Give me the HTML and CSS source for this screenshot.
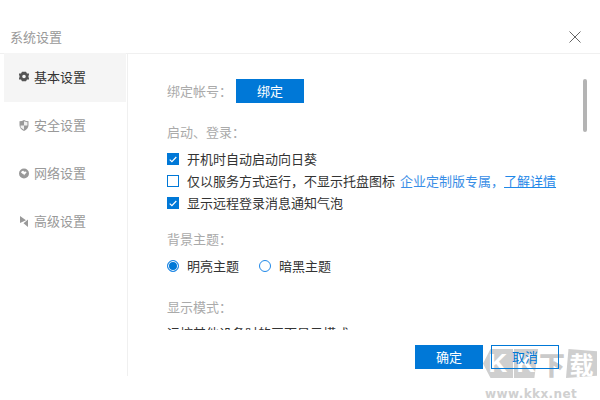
FILE: index.html
```html
<!DOCTYPE html>
<html lang="zh">
<head>
<meta charset="utf-8">
<title>系统设置</title>
<link rel="stylesheet" href="styles.css">
</head>
<body>
<div class="dialog">
  <header class="titlebar">
    <span class="title">系统设置</span>
    <svg class="close" width="12" height="12" viewBox="0 0 12 12"><path d="M.5.5l11 11M11.5.5l-11 11" stroke="#666" stroke-width="1" fill="none"/></svg>
  </header>
  <div class="body">
    <nav class="sidebar">
      <div class="nav-item active">
        <svg class="nav-icon" viewBox="0 0 10 10"><path fill-rule="evenodd" d="M3 .3h4l1 1.700 2 .1v1L9.400 5l.6 1.900v1l-2 .1-1 1.700H3L2 8 0 7.900v-1L.6 5 0 3.100v-1L2 2zM5 3.200a1.800 1.800 0 100 3.600 1.800 1.800 0 000-3.600z"/></svg>
        <span>基本设置</span>
      </div>
      <div class="nav-item">
        <svg class="nav-icon" viewBox="0 0 10 11"><path d="M5 0c1.300.8 2.800 1.200 4.500 1.300v4C9.500 7.800 7.500 10 5 11 2.500 10 .5 7.800.5 5.300v-4C2.200 1.200 3.700.8 5 0z"/><path fill="#fff" d="M5 1.300v4.200H1.600v2C3 8.500 4 9.300 5 9.700V5.500h3.400V2.200C7.100 2.100 6 1.800 5 1.300z" opacity=".85"/></svg>
        <span>安全设置</span>
      </div>
      <div class="nav-item">
        <svg class="nav-icon" viewBox="0 0 10 10"><path fill-rule="evenodd" d="M5 0a5 5 0 110 10A5 5 0 015 0zM3 2.500L2 4l1.500 1.200 1 .2L5 7l1-1.500 1.500-1.200-.5-1.300-2 .3-.5-1z"/></svg>
        <span>网络设置</span>
      </div>
      <div class="nav-item">
        <svg class="nav-icon" viewBox="0 0 10 11"><path d="M1 0l6 4.200L1 7zM9 3.500V11L4.500 7.300z"/></svg>
        <span>高级设置</span>
      </div>
    </nav>
    <main class="main">
      <div class="scrollpane">
        <section class="bind-row">
          <span class="label">绑定帐号&#xFF1A;</span>
          <button class="btn primary">绑定</button>
        </section>
        <section class="group startup">
          <div class="label">启动、登录&#xFF1A;</div>
          <div class="options">
            <label class="check"><span class="box on"><svg width="8" height="7" viewBox="0 0 8 7"><path d="M.7 3.600l2.200 2L7.300 1" stroke="#fff" stroke-width="1.200" fill="none"/></svg></span>开机时自动启动向日葵</label>
            <label class="check"><span class="box"></span>仅以服务方式运行&#xFF0C;不显示托盘图标<a class="note">企业定制版专属&#xFF0C;</a><a class="link">了解详情</a></label>
            <label class="check"><span class="box on"><svg width="8" height="7" viewBox="0 0 8 7"><path d="M.7 3.600l2.200 2L7.300 1" stroke="#fff" stroke-width="1.200" fill="none"/></svg></span>显示远程登录消息通知气泡</label>
          </div>
        </section>
        <section class="group theme">
          <div class="label">背景主题&#xFF1A;</div>
          <div class="radios">
            <label class="radio"><span class="dot on"></span>明亮主题</label>
            <label class="radio"><span class="dot"></span>暗黑主题</label>
          </div>
        </section>
        <section class="group mode">
          <div class="label">显示模式&#xFF1A;</div>
          <div class="mode-text">远控其他设备时的画面显示模式</div>
        </section>
        <div class="scrollbar"></div>
      </div>
      <footer class="footer">
        <button class="btn primary">确定</button>
        <button class="btn outline">取消</button>
      </footer>
    </main>
  </div>
  <div class="watermark">
    <div class="wm-logo">
      <span class="wm-blob wm-k1">K</span>
      <span class="wm-blob wm-k2">K</span>
      <span class="wm-xia">下</span>
      <span class="wm-blob wm-zai">载</span>
    </div>
    <div class="wm-url">www.kkx.net</div>
  </div>
</div>
</body>
</html>
```

FILE: styles.css
```css
* { box-sizing: border-box; }
html, body { margin: 0; padding: 0; background: #fff; }
body {
  width: 600px; height: 400px; overflow: hidden;
  font: 13px/20px "Noto Sans CJK SC", "Liberation Sans", sans-serif;
  color: #333;
}
.dialog { position: relative; width: 600px; height: 400px; padding-top: 27px; }
.titlebar {
  height: 27px; padding: 0 19px 0 10px;
  display: flex; align-items: flex-start; justify-content: space-between;
  border-bottom: 1px solid #f0f0f0;
}
.title { color: #999; }
.close { margin-top: 4px; }
.body { display: flex; height: 322px; }
.sidebar { width: 128px; padding-left: 4px; border-right: 1px solid #f0f0f0; flex: none; }
.nav-item {
  width: 122px; height: 48px; padding: 0 0 2px 15px;
  display: flex; align-items: center; gap: 5px; color: #999;
}
.nav-item.active { background: #f5f5f5; color: #333; height: 49px; margin-top: -1px; padding-bottom: 2px; }
.nav-icon { width: 10px; height: 11px; fill: #999; flex: none; }
.active .nav-icon { fill: #555; }
.main { flex: 1; display: flex; flex-direction: column; min-width: 0; }
.scrollpane { position: relative; height: 276px; overflow: hidden; padding: 25px 0 0 39px; }
.label { color: #aaa; }
.bind-row { display: flex; align-items: center; height: 24px; }
.bind-row .label { width: 69px; flex: none; }
.btn { width: 68px; height: 24px; padding: 0; border: 0; font: inherit; }
.primary { background: #0078d7; color: #fff; }
.outline { background: transparent; border: 1px solid #0078d7; color: #0078d7; }
.startup { margin-top: 19px; }
.options { margin-top: 6px; }
.check { display: flex; align-items: center; height: 22px; color: #333; }
.box {
  width: 12px; height: 12px; margin-right: 8px; flex: none;
  border: 1px solid #0078d7; display: flex; align-items: center; justify-content: center;
}
.box.on { background: #0078d7; }
.note { margin-left: 5px; color: #3a8ee6; }
.link { color: #1f88e8; text-decoration: underline; }
.theme { margin-top: 15px; }
.radios { margin-top: 6px; display: flex; gap: 20px; }
.radio { display: flex; align-items: center; height: 22px; width: 72px; color: #333; }
.dot {
  width: 12px; height: 12px; margin-right: 8px; flex: none;
  border: 1px solid #1f88e8; border-radius: 50%; background: #fff;
}
.dot.on { background: #0078d7; box-shadow: inset 0 0 0 1px #fff; }
.mode { margin-top: 20px; }
.mode-text { margin-top: 6px; }
.scrollbar {
  position: absolute; left: 455px; top: 25px;
  width: 4px; height: 53px; border-radius: 2px; background: #b4b4b4;
}
.footer { position: relative; z-index: 1; display: flex; gap: 8px; padding: 15px 0 0 287px; }
.watermark { position: absolute; left: 483px; top: 349px; width: 116px; pointer-events: none; }
.wm-logo { display: flex; height: 29px; gap: 1px; }
.wm-blob {
  display: flex; align-items: center; justify-content: center;
  height: 29px; background: #cfcfcf; color: #fff;
}
.wm-k1, .wm-k2 { font: 700 26px/29px "Liberation Sans", sans-serif; }
.wm-k1 { width: 30px; clip-path: polygon(25% 0, 100% 0, 100% 100%, 25% 100%, 0 50%); }
.wm-k2 { width: 24px; clip-path: polygon(0 0, 100% 0, 85% 100%, 0 100%); }
.wm-xia { width: 26px; color: #cacaca; font-size: 26px; line-height: 29px; font-weight: 900; text-align: center; }
.wm-zai { width: 31px; font-size: 24px; font-weight: 700; clip-path: polygon(8% 0, 100% 8%, 100% 92%, 0 100%); }
.wm-url { font: 700 12px/14px "DejaVu Sans", sans-serif; color: #d0d0d0; letter-spacing: .4px; margin-top: 9px; padding-left: 2px; }
```
